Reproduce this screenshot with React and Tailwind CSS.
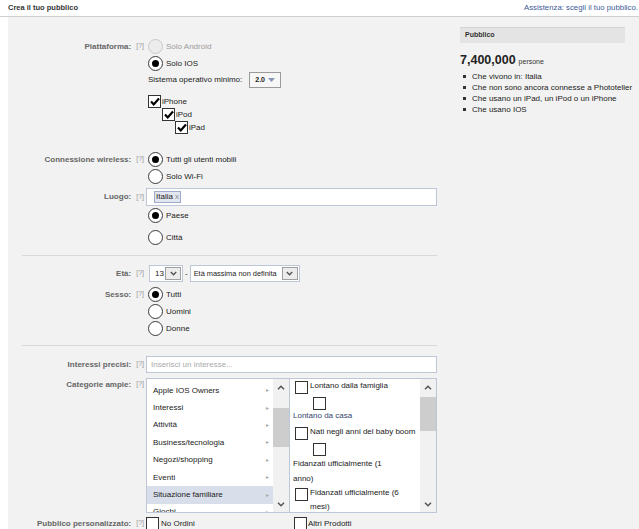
import React from 'react';
import clsx from 'clsx';

// small "[?]" help marker next to each label
const Help = () => <span className="ml-[5px] text-[7px] font-normal text-[#9a9a9a]">[?]</span>;

function Row({ label, lh = 'h-[17px]', className, children }) {
  return (
    <div className={clsx('flex', className)}>
      <div className={clsx('w-[140px] shrink-0 flex items-center justify-end pr-[4px]', lh)}>
        {label && (
          <>
            <span className="text-[8px] font-bold text-[#666] whitespace-nowrap">{label}</span>
            <Help />
          </>
        )}
      </div>
      <div className="flex-1 min-w-0">{children}</div>
    </div>
  );
}

function Radio({ checked, disabled, label }) {
  return (
    <div className="flex items-center h-[17px]">
      <span
        className={clsx(
          'w-[15px] h-[15px] rounded-full border flex items-center justify-center shrink-0',
          disabled ? 'border-[#c9c9c9] bg-[#ececec]' : 'border-[#3a3a3a] bg-white'
        )}
      >
        {checked && <span className="w-[7px] h-[7px] rounded-full bg-black" />}
      </span>
      <span className={clsx('ml-[3px] text-[8px]', disabled ? 'text-[#9a9a9a]' : 'text-[#222]')}>{label}</span>
    </div>
  );
}

function Check({ checked }) {
  return (
    <span className="w-[13px] h-[13px] border border-[#333] bg-white flex items-center justify-center shrink-0">
      {checked && (
        <svg width="10" height="9" viewBox="0 0 10 9">
          <path d="M1 4.6 L3.7 7.4 L9 1.4" stroke="#000" strokeWidth="2.2" fill="none" />
        </svg>
      )}
    </span>
  );
}

function DropBtn() {
  return (
    <span className="w-[16px] h-[13px] border border-[#a0a0a0] bg-[#ececec] flex items-center justify-center shrink-0">
      <svg width="7" height="5" viewBox="0 0 7 5">
        <path d="M0.8 1 L3.5 3.8 L6.2 1" stroke="#555" strokeWidth="1.4" fill="none" />
      </svg>
    </span>
  );
}

function Chevron({ up }) {
  return (
    <div className="h-[16px] flex items-center justify-center shrink-0">
      <svg width="8" height="5" viewBox="0 0 8 5">
        <path d={up ? 'M1 4.2 L4 1.2 L7 4.2' : 'M1 0.8 L4 3.8 L7 0.8'} stroke="#555" strokeWidth="1.5" fill="none" />
      </svg>
    </div>
  );
}

function Scrollbar({ thumbTop, thumbH }) {
  return (
    <div className="w-[16px] bg-[#f1f1f1] flex flex-col shrink-0">
      <Chevron up />
      <div className={clsx('bg-[#cdcdcd]', thumbTop, thumbH)} />
      <div className="flex-1" />
      <Chevron />
    </div>
  );
}

const categories = [
  'Apple IOS Owners',
  'Interessi',
  'Attività',
  'Business/tecnologia',
  'Negozi/shopping',
  'Eventi',
  'Situazione familiare',
  'Giochi',
];

const reach = [
  'Che vivono in: Italia',
  'Che non sono ancora connesse a Phototeller',
  'Che usano un iPad, un iPod o un iPhone',
  'Che usano IOS',
];

export default function App() {
  return (
    <div className="w-[639px] h-[529px] overflow-hidden bg-white text-[#222]" style={{ fontFamily: '"Liberation Sans", Arial, sans-serif' }}>
      {/* header */}
      <div className="h-[17px] border-b border-[#cfcfcf] flex items-center justify-between pl-[8px] pr-[1px]">
        <span className="text-[7.5px] font-bold text-[#333]">Crea il tuo pubblico</span>
        <span className="text-[7.8px] text-[#3b5998]">Assistenza: scegli il tuo pubblico.</span>
      </div>

      <div className="ml-[8px] bg-[#f2f2f2] h-[520px] flex">
        {/* form */}
        <div className="w-[429px] shrink-0 pt-[21px]">
          <Row label="Piattaforma:">
            <Radio disabled label="Solo Android" />
            <Radio checked label="Solo IOS" />
            <div className="flex items-start h-[17px]">
              <span className="text-[8px] leading-[16px] text-[#222]">Sistema operativo minimo:</span>
              <span className="ml-[7px] w-[32px] h-[16px] border border-[#9a9a9a] bg-[#f7f7f7] flex items-center justify-between px-[5px]">
                <span className="text-[7px] font-bold">2.0</span>
                <svg width="7" height="4" viewBox="0 0 7 4">
                  <path d="M0 0 L7 0 L3.5 4 Z" fill="#8797b3" />
                </svg>
              </span>
            </div>
            <div className="mt-[6px]">
              <div className="flex items-center h-[13px]">
                <Check checked />
                <span className="ml-[1px] text-[8px]">iPhone</span>
              </div>
              <div className="flex items-center h-[13px] ml-[14px]">
                <Check checked />
                <span className="ml-[1px] text-[8px]">iPod</span>
              </div>
              <div className="flex items-center h-[13px] ml-[27px]">
                <Check checked />
                <span className="ml-[1px] text-[8px]">iPad</span>
              </div>
            </div>
          </Row>

          <Row label="Connessione wireless:" className="mt-[17px]">
            <Radio checked label="Tutti gli utenti mobili" />
            <Radio label="Solo Wi-Fi" />
          </Row>

          <Row label="Luogo:" lh="h-[18px]" className="mt-[3px]">
            <div className="-ml-[2px] w-[291px] h-[18px] border border-[#bdc7d8] bg-white flex items-center pl-[7px]">
              <span className="h-[12px] flex items-center px-[1px] bg-[#e2e6f0] border border-[#9dacc9] text-[8px]">
                Italia<span className="ml-[2px] text-[#8a8a8a]">x</span>
              </span>
            </div>
            <div className="mt-[1px]">
              <Radio checked label="Paese" />
            </div>
            <div className="mt-[5px]">
              <Radio label="Città" />
            </div>
          </Row>

          <div className="mt-[9px] ml-[14px] w-[415px] border-t border-[#d9d9d9]" />

          <Row label="Età:" className="mt-[9px]">
            <div className="flex items-center h-[17px] ml-[1px]">
              <span className="w-[34px] h-[17px] border border-[#bdc7d8] bg-white flex items-center justify-between pl-[5px] pr-[1px]">
                <span className="text-[8px]">13</span>
                <DropBtn />
              </span>
              <span className="mx-[2px] text-[8px]">-</span>
              <span className="w-[110px] h-[17px] border border-[#bdc7d8] bg-white flex items-center justify-between pl-[3px] pr-[1px]">
                <span className="text-[7.4px] whitespace-nowrap">Età massima non definita</span>
                <DropBtn />
              </span>
            </div>
          </Row>

          <Row label="Sesso:" className="mt-[4px]">
            <Radio checked label="Tutti" />
            <Radio label="Uomini" />
            <Radio label="Donne" />
          </Row>

          <div className="mt-[8px] ml-[14px] w-[415px] border-t border-[#d9d9d9]" />

          <Row label="Interessi precisi:" className="mt-[10px]">
            <div className="-ml-[2px] w-[291px] h-[17px] border border-[#bdc7d8] bg-white flex items-center pl-[4px]">
              <span className="text-[8px] text-[#aaa]">Inserisci un interesse...</span>
            </div>
          </Row>

          <Row label="Categorie ampie:" lh="h-[13px]" className="mt-[5px]">
            <div className="-ml-[2px] w-[291px] h-[135px] border border-[#bdc7d8] bg-white flex">
              {/* left list */}
              <div className="w-[143px] flex border-r border-[#bdc7d8]">
                <div className="w-[127px] pt-[3px] overflow-hidden">
                  {categories.map((c) => (
                    <div
                      key={c}
                      className={clsx(
                        'h-[17.4px] flex items-center justify-between pl-[6px] pr-[4px] text-[8px]',
                        c === 'Situazione familiare' && 'bg-[#d8dfea]'
                      )}
                    >
                      <span>{c}</span>
                      <span className="text-[6px] text-[#aaa]">▸</span>
                    </div>
                  ))}
                </div>
                <Scrollbar thumbTop="mt-[13px]" thumbH="h-[39px]" />
              </div>
              {/* right list */}
              <div className="flex-1 flex">
                <div className="flex-1 pt-[2px] text-[8px] overflow-hidden">
                  <div className="flex items-start pl-[5px]">
                    <Check />
                    <span className="ml-[2px] leading-[10px]">Lontano dalla famiglia</span>
                  </div>
                  <div className="mt-[3px] pl-[23px] flex">
                    <Check />
                  </div>
                  <div className="pl-[3px] h-[12px] leading-[12px] text-[#34456e]">Lontano da casa</div>
                  <div className="mt-[5px] flex items-start pl-[5px]">
                    <Check />
                    <span className="ml-[2px] leading-[10px]">Nati negli anni del baby boom</span>
                  </div>
                  <div className="mt-[3px] pl-[23px] flex">
                    <Check />
                  </div>
                  <div className="pl-[3px] leading-[15px]">
                    Fidanzati ufficialmente (1<br />anno)
                  </div>
                  <div className="mt-[1.5px] flex items-start pl-[5px]">
                    <Check />
                    <span className="ml-[2px] -mt-[2px] leading-[14px]">
                      Fidanzati ufficialmente (6<br />mesi)
                    </span>
                  </div>
                </div>
                <Scrollbar thumbTop="mt-[2px]" thumbH="h-[34px]" />
              </div>
            </div>
          </Row>

          <Row label="Pubblico personalizzato:" lh="h-[13px]" className="mt-[4px]">
            <div className="flex items-center -ml-[2px]">
              <div className="w-[148px] flex items-center">
                <Check />
                <span className="ml-[2px] text-[8px]">No Ordini</span>
              </div>
              <Check />
              <span className="ml-[1px] text-[8px]">Altri Prodotti</span>
            </div>
          </Row>
        </div>

        {/* sidebar */}
        <div className="ml-[23px] w-[165px] shrink-0 pt-[10px]">
          <div className="h-[16px] bg-[#e4e4e4] border-t border-[#d4d4d4] flex items-center pl-[5px]">
            <span className="text-[7px] font-bold text-[#333]">Pubblico</span>
          </div>
          <div className="mt-[9px] flex items-baseline">
            <span className="text-[12.5px] leading-[16px] font-bold text-[#222]">7,400,000</span>
            <span className="ml-[3px] text-[7px] text-[#333]">persone</span>
          </div>
          <ul className="mt-[3px]">
            {reach.map((r) => (
              <li key={r} className="h-[11px] flex items-center text-[8px] text-[#222] whitespace-nowrap">
                <span className="w-[3px] h-[3px] bg-[#333] ml-[3px] mr-[6px] shrink-0" />
                {r}
              </li>
            ))}
          </ul>
        </div>
      </div>
    </div>
  );
}
